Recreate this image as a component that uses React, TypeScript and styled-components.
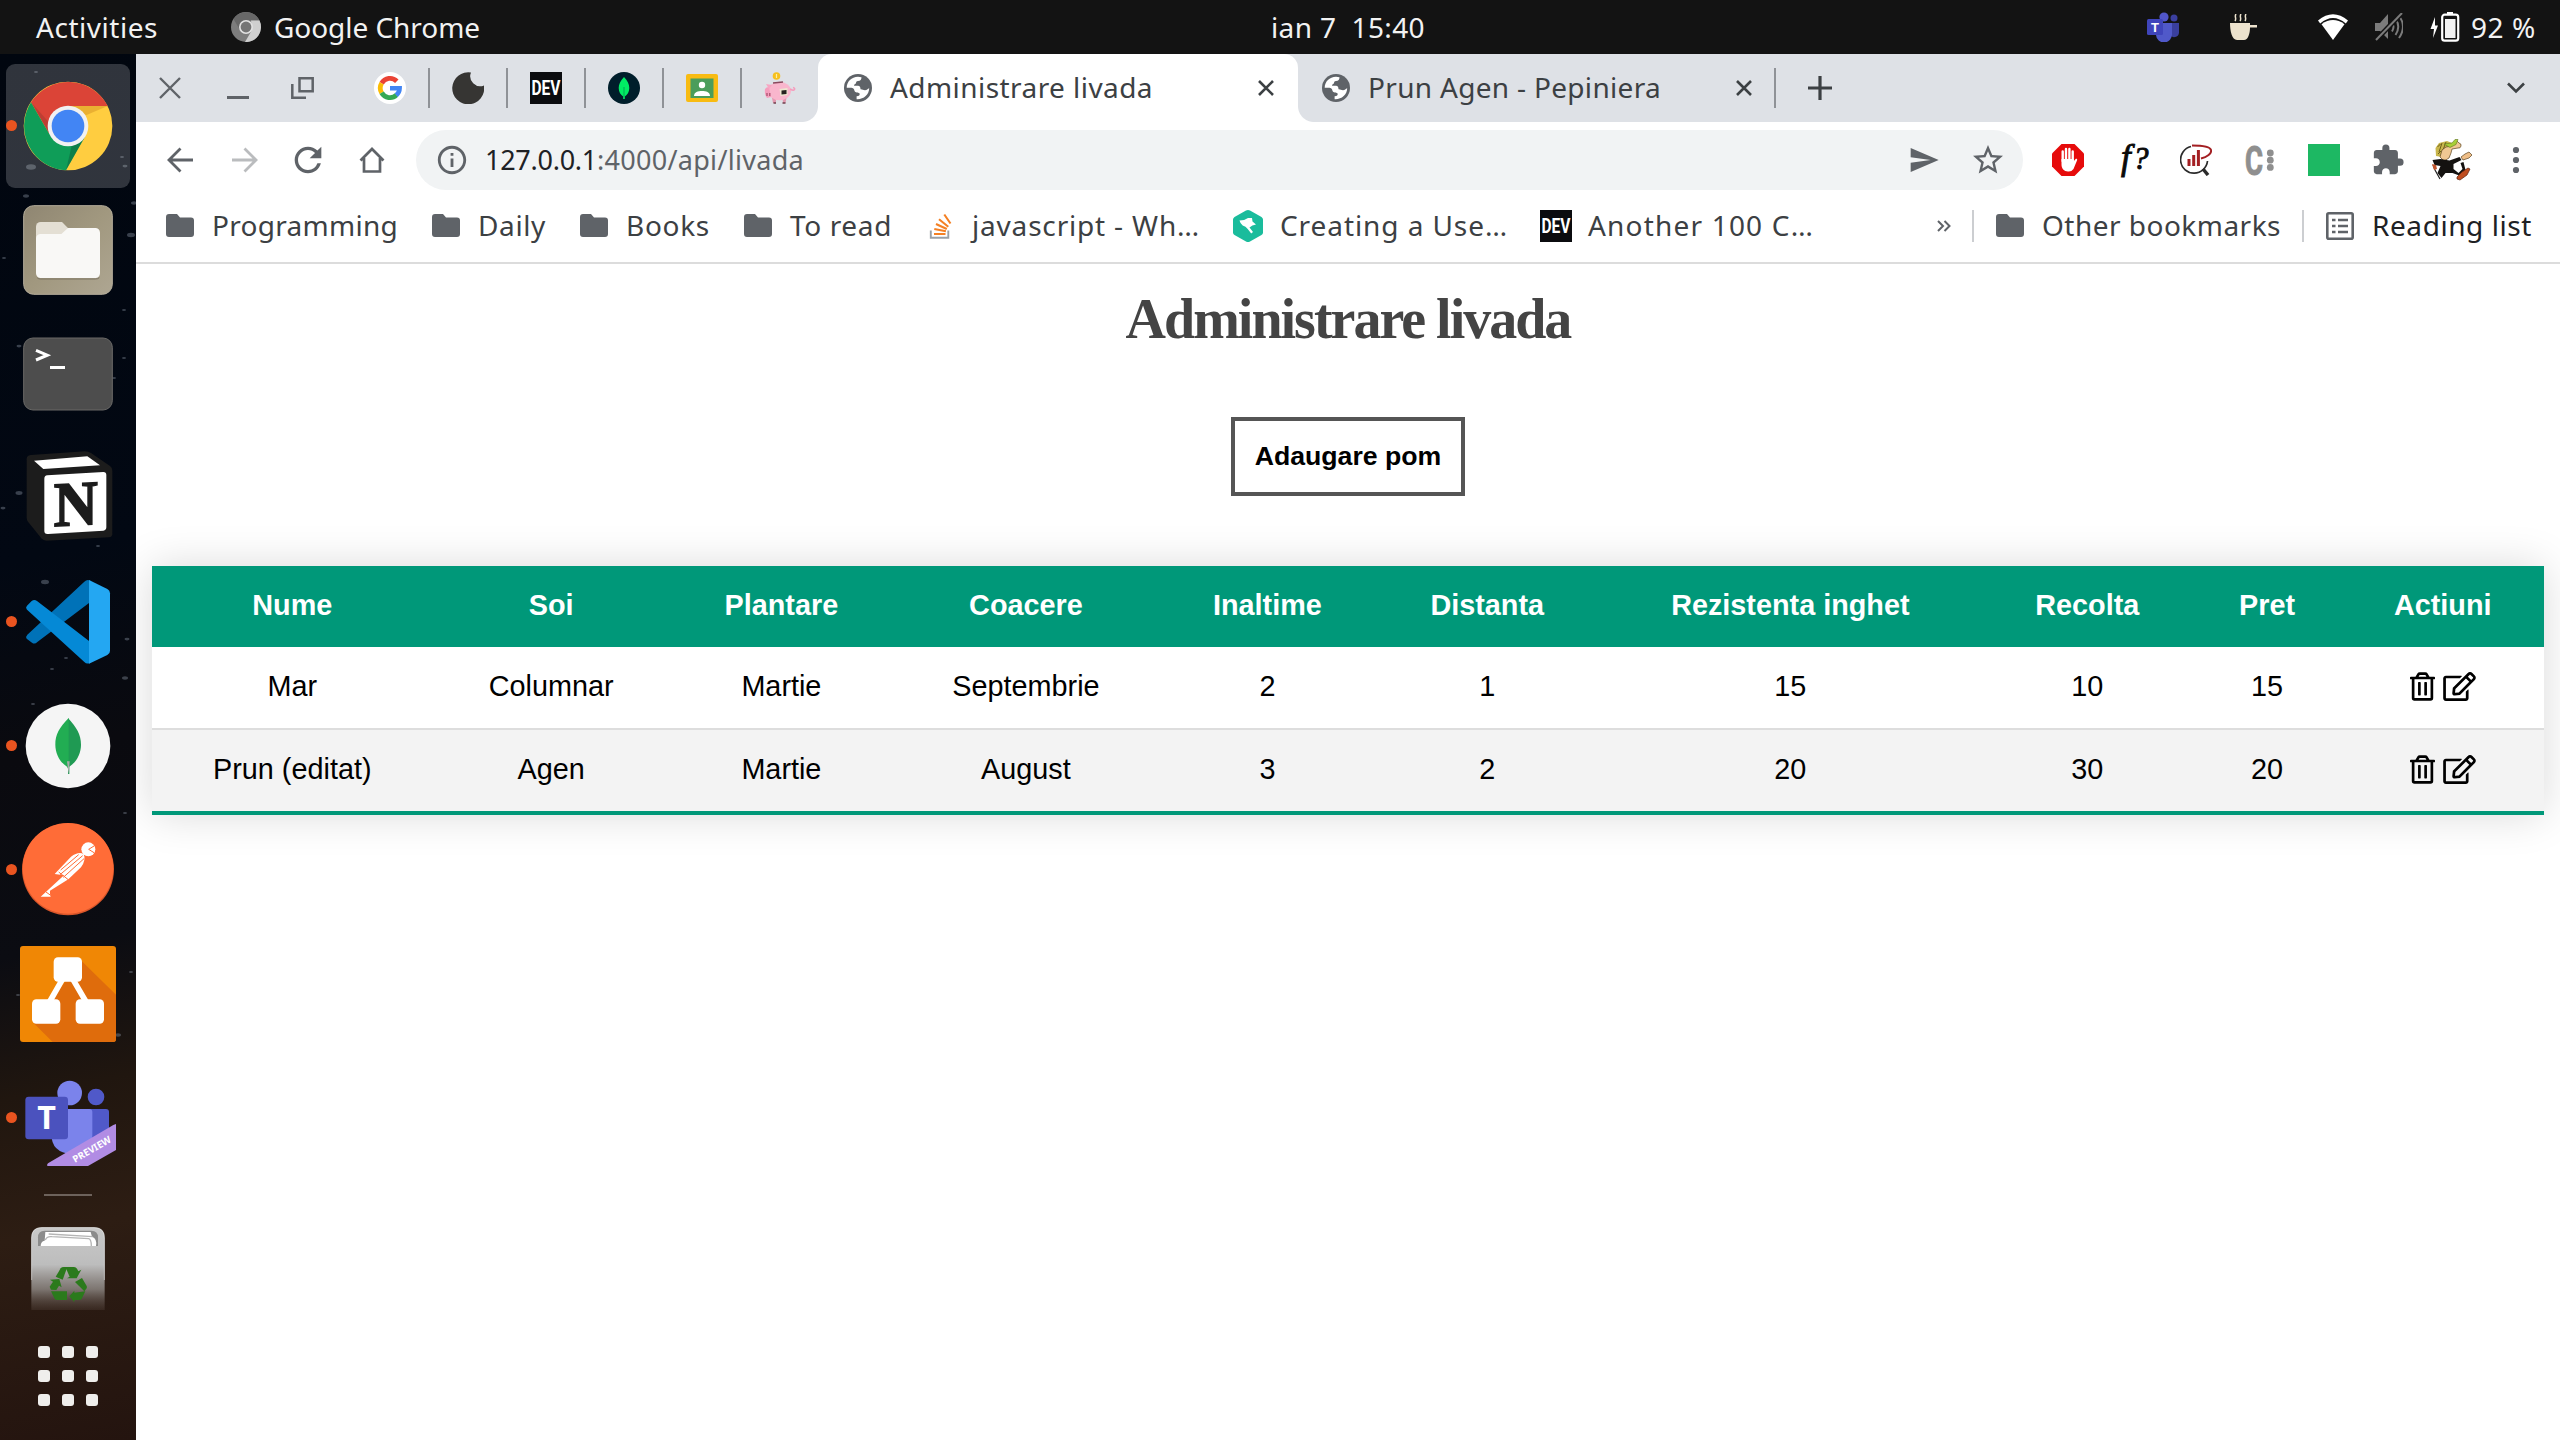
import React, { useLayoutEffect, useRef, useState } from 'react';
import styled, { createGlobalStyle, css } from 'styled-components';
import { FaRegEdit, FaRegTrashAlt } from 'react-icons/fa';
import { MdExtension, MdInfoOutline, MdRefresh, MdSend, MdStarBorder } from 'react-icons/md';

const Global = createGlobalStyle`
  * { box-sizing: border-box; }
  html, body { margin: 0; padding: 0; background: #fff; overflow: hidden; }
  svg { display: block; flex: none; }
`;

const UI_FONT = '"Noto Sans", "Open Sans", sans-serif';
const WEB_FONT = '"Liberation Sans", Arial, sans-serif';

/* ---------- Text fitted to a given width ---------- */

const LabelBox = styled.span<{ $w: number; $size: number; $color: string; $ml: number }>`
  display: block;
  flex: none;
  width: ${(p) => p.$w}px;
  margin-left: ${(p) => p.$ml}px;
  font: 400 ${(p) => p.$size}px/38px ${UI_FONT};
  color: ${(p) => p.$color};
  white-space: pre;
`;

type LabelProps = {
  w: number;
  size?: number;
  color?: string;
  ml?: number;
  children: string;
};

function Label({ w, size = 28, color = '#3c4043', ml = 0, children }: LabelProps) {
  const ref = useRef<HTMLSpanElement>(null);
  const [spacing, setSpacing] = useState(0);
  useLayoutEffect(() => {
    const natural = ref.current!.getBoundingClientRect().width;
    setSpacing((w - natural) / children.length);
  }, [w, children]);
  return (
    <LabelBox $w={w} $size={size} $color={color} $ml={ml}>
      <span ref={ref} style={{ letterSpacing: spacing }}>{children}</span>
    </LabelBox>
  );
}

/* ---------- Desktop shell ---------- */

const Desktop = styled.div`
  width: 2560px;
  height: 1440px;
  display: flex;
  flex-direction: column;
  overflow: hidden;
`;

const TopBar = styled.header`
  height: 54px;
  flex: none;
  display: flex;
  align-items: center;
  padding: 0 24px 0 36px;
  background: #131313;
`;

const Spot = styled.div<{ $ml?: number }>`
  flex: none;
  margin-left: ${(p) => p.$ml ?? 0}px;
`;

const Tray = styled.div`
  margin-left: auto;
  display: flex;
  align-items: center;
`;

const Main = styled.div`
  flex: 1;
  display: flex;
  min-height: 0;
`;

const Dock = styled.nav`
  position: relative;
  width: 136px;
  flex: none;
  display: flex;
  flex-direction: column;
  align-items: center;
  padding-top: 10px;
  background: linear-gradient(168deg, #01060f 0%, #020813 36%, #0a0a0f 50%, #0b0c12 64%, #20160f 74%, #2d1d13 84%, #24140f 100%);
`;

const Stars = styled.svg`
  position: absolute;
  inset: 0;
`;

const DockItem = styled.div<{ $active?: boolean; $running?: boolean }>`
  position: relative;
  width: 124px;
  height: 124px;
  flex: none;
  border-radius: 9px;
  ${(p) => p.$active && css`background: rgba(255, 255, 255, 0.19);`}
  ${(p) => p.$running && css`
    &::before {
      content: '';
      position: absolute;
      left: 0;
      top: 56px;
      width: 11px;
      height: 11px;
      border-radius: 50%;
      background: #e95420;
    }
  `}
`;

const DockRule = styled.div`
  width: 48px;
  height: 2px;
  margin: 14px 0 13px;
  background: #6d625b;
`;

const AppGrid = styled.div`
  display: grid;
  grid-template-columns: repeat(3, 12px);
  gap: 12px;
  margin-top: 13px;
`;

const AppDot = styled.i`
  height: 12px;
  border-radius: 3px;
  background: #efeeec;
`;

/* ---------- Browser ---------- */

const Browser = styled.section`
  width: 2424px;
  flex: none;
  display: flex;
  flex-direction: column;
  background: #fff;
`;

const TabStrip = styled.div`
  height: 68px;
  flex: none;
  display: flex;
  align-items: center;
  background: #dee1e6;

  ${LabelBox} { margin-bottom: 2px; }
`;

const PinnedTabs = styled.div`
  display: flex;
  align-items: center;
  margin-left: 60px;
  padding-right: 22px;
`;

const PinnedTab = styled.div`
  display: flex;
  align-items: center;
  & + & { margin-left: 22px; }
  & + &::before {
    content: '';
    width: 2px;
    height: 40px;
    margin-right: 22px;
    background: #8f9297;
  }
`;

const Tab = styled.div<{ $w: number; $active?: boolean }>`
  position: relative;
  width: ${(p) => p.$w}px;
  height: 68px;
  flex: none;
  display: flex;
  align-items: center;
  padding: 0 24px 0 ${(p) => (p.$active ? 26 : 24)}px;
  ${(p) => p.$active && css`
    background: #fff;
    border-radius: 14px 14px 0 0;
    &::before, &::after {
      content: '';
      position: absolute;
      bottom: 0;
      width: 16px;
      height: 16px;
    }
    &::before { left: -16px; background: radial-gradient(circle at 0 0, transparent 15.5px, #fff 16.5px); }
    &::after { right: -16px; background: radial-gradient(circle at 100% 0, transparent 15.5px, #fff 16.5px); }
  `}
`;

const End = styled.div<{ $mr?: number }>`
  margin-left: auto;
  margin-right: ${(p) => p.$mr ?? 0}px;
  display: flex;
  align-items: center;
`;

const Rule = styled.div<{ $h: number; $ml?: number; $color: string }>`
  width: 2px;
  height: ${(p) => p.$h}px;
  flex: none;
  margin-left: ${(p) => p.$ml ?? 0}px;
  background: ${(p) => p.$color};
`;

const Toolbar = styled.div`
  height: 76px;
  flex: none;
  display: flex;
  align-items: center;
  color: #5f6368;
`;

const Omnibox = styled.div`
  width: 1607px;
  height: 60px;
  flex: none;
  display: flex;
  align-items: center;
  margin-left: 31px;
  padding: 0 17px 0 19px;
  border-radius: 30px;
  background: #f1f3f4;
`;

const Bookmarks = styled.div`
  height: 66px;
  flex: none;
  display: flex;
  align-items: center;
  padding: 0 0 8px 30px;
  border-bottom: 2px solid #dcdcdc;
  color: #5f6368;

  ${LabelBox} { margin-bottom: 2px; }
`;

/* ---------- Page ---------- */

const Page = styled.main`
  flex: 1;
  display: flex;
  flex-direction: column;
  align-items: center;
  padding: 0 16px;
  overflow: hidden;
`;

const Title = styled.h1`
  margin: 23px 0 0;
  font: 700 56px/64px "Liberation Serif", "Times New Roman", serif;
  letter-spacing: -2px;
  color: #444;
`;

const AddButton = styled.button`
  height: 79px;
  margin: 66px 0 70px;
  padding: 0 20px;
  border: 4px solid #555;
  background: #fff;
  color: #000;
  font: 700 26.667px/31px ${WEB_FONT};
`;

const Table = styled.table`
  width: 100%;
  border-collapse: collapse;
  text-align: center;
  font: 400 28.8px/33px ${WEB_FONT};
  color: #000;
  box-shadow: 0 0 40px rgba(0, 0, 0, 0.15);
`;

const HeadRow = styled.tr`
  background: #009879;
  color: #fff;
`;

const Th = styled.th`
  padding: 23px 30px 25px;
`;

const Row = styled.tr<{ $last?: boolean }>`
  background: ${(p) => (p.$last ? '#f3f3f3' : '#fff')};
  border-bottom: ${(p) => (p.$last ? '4px solid #009879' : '2px solid #ddd')};
`;

const Td = styled.td`
  padding: 23px 30px 25px;
`;

const Actions = styled.div`
  height: 33px;
  display: flex;
  justify-content: center;
  align-items: center;
  gap: 8px;
  padding-bottom: 1px;
`;

/* ---------- Small icons ---------- */

const Cross = ({ s = 16, c = '#3c4043', w = 2.6 }) => (
  <svg width={s} height={s} viewBox={`0 0 ${s} ${s}`} stroke={c} strokeWidth={w}>
    <path d={`M1 1L${s - 1} ${s - 1}M${s - 1} 1L1 ${s - 1}`} />
  </svg>
);

const Globe = () => (
  <svg width="28" height="28" viewBox="0 0 28 28">
    <circle cx="14" cy="14" r="14" fill="#5f6368" />
    <path d="M2.700 13.800C2.800 7.500 7.500 2.900 14 2.700L17.500 3.200C17.500 5.500 16.500 6.800 14 7 12.300 7.200 12 8 12 9.300 11.500 10.300 10 10.200 10 11.800H14C15.800 11.800 16.500 13 16.500 15.200 18.500 15 19 16.200 21 16.200 23 16.200 23.500 15 25.200 14.300 25 21 19.500 25.600 12.600 25.200V22.300C15 22 16 21.300 15.600 19.500 15.200 18.300 12 18.800 11 17.700 10 16.600 10.500 14.800 9 14.200 7 13.600 5 14 2.700 13.800z" fill="#fff" />
  </svg>
);

const Folder = () => (
  <svg width="28" height="24" viewBox="0 0 28 24">
    <path d="M3 0h8l3 3.500h11a3 3 0 0 1 3 3V20a3 3 0 0 1-3 3H3a3 3 0 0 1-3-3V3a3 3 0 0 1 3-3z" fill="#5f6368" />
  </svg>
);

const Dev = () => (
  <svg width="32" height="32" viewBox="0 0 32 32" overflow="visible">
    <path d="M0 0h32v32H0z" fill="#0b0c0f" />
    <text x="1.500" y="23" textLength="29" lengthAdjust="spacingAndGlyphs" fill="#fff" fontFamily="Roboto, sans-serif" fontWeight="700" fontSize="20">DEV</text>
  </svg>
);

const Google = () => (
  <svg width="32" height="32" viewBox="0 0 32 32">
    <circle cx="16" cy="16" r="16" fill="#fff" />
    <g fill="none" strokeWidth="4.800">
      <path d="M7.600 11.200A9.600 9.600 0 0 1 22.800 9.200" stroke="#ea4335" />
      <path d="M7.600 20.800A9.600 9.600 0 0 1 7.600 11.200" stroke="#fbbc05" />
      <path d="M22.500 23A9.600 9.600 0 0 1 7.600 20.800" stroke="#34a853" />
      <path d="M16 16.200H25.600A9.600 9.600 0 0 1 22.300 23.200" stroke="#4285f4" strokeWidth="4.600" />
    </g>
  </svg>
);

const Moon = () => (
  <svg width="32" height="32" viewBox="0 0 32 32">
    <path d="M19 .500a10 10 0 0 0 13 13A16 16 0 1 1 19 .500z" fill="#363533" />
  </svg>
);

const MongoTab = () => (
  <svg width="32" height="32" viewBox="0 0 32 32">
    <circle cx="16" cy="16" r="16" fill="#001e2b" />
    <path d="M16 5c3.500 4 5.300 7 5.300 11 0 4-2 7-4.500 8.500V27h-1.600v-2.500C12.700 23 10.700 20 10.700 16c0-4 1.800-7 5.300-11z" fill="#00ed64" />
    <path d="M16 15v10" stroke="#00a651" strokeWidth="1" />
  </svg>
);

const Classroom = () => (
  <svg width="32" height="32" viewBox="0 0 32 32">
    <rect y="2" width="32" height="28" rx="2" fill="#f8bb12" />
    <path d="M4.500 6.500h23v19.500h-23z" fill="#4a9d5b" />
    <circle cx="16" cy="13" r="3.200" fill="#fff" />
    <path d="M8 24c0-4 4-5 8-5s8 1 8 5z" fill="#fff" />
  </svg>
);

const Piggy = () => (
  <svg width="32" height="32" viewBox="0 0 32 32">
    <circle cx="12.500" cy="4" r="3.800" fill="#f7c01e" />
    <path d="M12.500 2v4" stroke="#fff0a0" strokeWidth="1.200" />
    <path d="M8 26h4v5H9zM18.500 26h4l-1 5h-2.500z" fill="#e39ab0" />
    <path d="M9.500 31h2.500M18.500 31h3" stroke="#70404e" strokeWidth="1.600" />
    <ellipse cx="15.500" cy="19" rx="11.500" ry="9.200" fill="#f9b6cd" />
    <path d="M1 17q1-2 4-2l2 10-4 1q-3-4-2-9z" fill="#f59dbd" />
    <path d="M2 12l6 1-3 4z" fill="#f7a6c3" />
    <path d="M26 17c5 3 6-1 3-1.500" fill="none" stroke="#f59dbd" strokeWidth="1.500" />
    <path d="M9 11l10-1" stroke="#8a4a5e" strokeWidth="1.600" />
    <path d="M15.500 17l8-1v7l-7 1z" fill="#ece7d0" />
    <path d="M17.500 18.500l5-.500v4l-5 .500z" fill="#25221f" />
    <path d="M3 21v3M5.800 21v3" stroke="#a34c68" strokeWidth="1.200" />
  </svg>
);

const StackOverflow = () => (
  <svg width="24" height="28" viewBox="0 0 24 28">
    <path d="M1.800 18.500v7.200h17.500v-7.200" fill="none" stroke="#9aa0a6" strokeWidth="1.900" />
    <path d="M5 22h11.500M5.300 17l11.600 2.300M7 12l10.800 5M10 7.300l9.300 7.500M15.300 2.500l6.200 9" stroke="#f48024" strokeWidth="2.100" />
  </svg>
);

const Hex = () => (
  <svg width="30" height="32" viewBox="0 0 30 32">
    <path d="M15 0q1 0 2 .600l11.500 6.400Q30 8 30 9.500v13q0 1.500-1.500 2.500L17 31.400q-2 1-4 0L1.500 25Q0 24 0 22.500v-13Q0 8 1.500 7L13 .600q1-.600 2-.600z" fill="#1abc9c" />
    <path d="M6.500 10.500q5 0 8.500-2.500h4l.500 3.500 3.500 3q-4 .500-6.500 3l3.500 4.500-1.800 1.500-3.500-4.500q-2-3-5-3.500-2.500-2-3.200-5z" fill="#fff" />
  </svg>
);

const Abp = () => (
  <svg width="32" height="32" viewBox="0 0 32 32">
    <path d="M9.500 0h13L32 9.500v13L22.500 32h-13L0 22.500v-13z" fill="#e60b0b" />
    <g stroke="#fff" strokeWidth="2.400" strokeLinecap="round">
      <path d="M10.700 7.500V17M14 5V17M17.400 5V17M20.700 7.500V17" />
    </g>
    <path d="M9.500 15h12.400v2l1.500-1.800c1-.900 2.200-.200 1.700 1L21.500 25a6 6 0 0 1-5.500 2.500c-4 0-6.500-3-6.500-7z" fill="#fff" />
  </svg>
);

const WhatFont = () => (
  <svg width="32" height="32" viewBox="0 0 32 32" overflow="visible" fontFamily="Liberation Serif, serif" fontStyle="italic" fill="#0a0a0a" stroke="#0a0a0a" strokeWidth=".9">
    <text x="5" y="24.500" fontSize="35">f</text>
    <text x="17" y="25" fontSize="31">?</text>
  </svg>
);

const ChartLens = () => (
  <svg width="32" height="32" viewBox="0 0 32 32" fill="none">
    <path d="M11 2.500A13.500 13.500 0 1 0 27.500 17" stroke="#2b2b2b" strokeWidth="1.700" />
    <path d="M23 25l5 6" stroke="#2b2b2b" strokeWidth="3.500" />
    <path d="M12 1.500c8 0 18 1 19 4.500s-4 7-10 8.500" stroke="#a31f22" strokeWidth="2" />
    <path d="M9 22v-7M13.700 22V11M18.400 22V6" stroke="#a31f22" strokeWidth="3" />
  </svg>
);

const ColonC = () => (
  <svg width="32" height="32" viewBox="0 0 32 32" overflow="visible" fill="#8f8f8f">
    <text x="1" y="30.500" textLength="18" lengthAdjust="spacingAndGlyphs" fontFamily="Roboto, sans-serif" fontWeight="700" fontSize="41" stroke="#8f8f8f">C</text>
    <circle cx="26.300" cy="9" r="3.400" />
    <circle cx="26.300" cy="16.200" r="3.400" />
    <circle cx="26.300" cy="23.400" r="3.400" />
  </svg>
);

const GreenSquare = styled.div`
  width: 32px;
  height: 32px;
  background: #1db863;
`;

const Runner = () => (
  <svg width="42" height="42" viewBox="0 0 42 42">
    <path d="M5 17L4.500 9 8 4l8-2 5 2-3 5-3 8-4 1z" fill="#c9b64c" />
    <path d="M6.500 8l3-3M11 4l-3 9M15 3l-3 8M7 15l3-3" stroke="#6f5f1a" strokeWidth="1" />
    <path d="M11 11l4-3 6-1 5-5 2 2a2.500 2.500 0 0 1-1 5l-6 1-1 4-2 5-5 3-4-4z" fill="#f0c893" stroke="#5a4320" strokeWidth=".7" />
    <path d="M13 5l8-1 3-3.500 3 0-2 5-6 3z" fill="#a7cf37" stroke="#60761f" strokeWidth=".6" />
    <path d="M1.500 21l8-1 9 1.500 10-3.500 2 3-8 4v5l5 4 4-4-2-6 3-1 2 8-5 6-8-3-7 0-4 5-4-5 3-7-6-1z" fill="#141210" />
    <path d="M2 26l2 5 5 9" fill="none" stroke="#222" strokeWidth="1.200" />
    <path d="M30 18l4-3 4-2 3 3-3 3-6 2z" fill="#eebd86" stroke="#5a4320" strokeWidth=".7" />
    <path d="M1 25l4 1 1 4-3 1z" fill="#c2552c" />
    <path d="M26 38l5-5 6-4 2 1-3 6-7 5-3-1z" fill="#bf4d20" stroke="#5b2410" strokeWidth=".7" />
  </svg>
);

const ReadingList = () => (
  <svg width="28" height="28" viewBox="0 0 28 28" fill="none" stroke="#5f6368">
    <rect x="1.300" y="1.300" width="25.400" height="25.400" rx="1.500" strokeWidth="2.600" />
    <path d="M6 8h3.500M6 14h3.500M6 20h3.500M12 8h10M12 14h10M12 20h10" strokeWidth="2.600" />
  </svg>
);

const Arrow = ({ flip = false, c = '#5f6368' }) => (
  <svg width="26" height="26" viewBox="0 0 26 26" fill="none" stroke={c} strokeWidth="2.800">
    <path d={flip ? 'M0 13H24M12.500 1.500L24 13L12.500 24.500' : 'M26 13H2M13.500 1.500L2 13L13.500 24.500'} />
  </svg>
);

const ChromeGray = () => (
  <svg width="30" height="30" viewBox="-15 -15 30 30">
    <circle r="15" fill="#7d7d7d" />
    <path d="M-12.500-8A15 15 0 0 1 13.500-6.500H0L-6 3z" fill="#686868" />
    <path d="M13.500-6.500A15 15 0 0 1-1 15L6 3 5-6.500z" fill="#cfcfcf" />
    <circle r="7" fill="#e2e2e2" />
    <circle r="5.400" fill="#757575" />
  </svg>
);

const TeamsSmall = () => (
  <svg width="32" height="30" viewBox="0 0 32 30">
    <circle cx="27" cy="6" r="3.500" fill="#3b3f9f" />
    <path d="M23 11h9v10a5 5 0 0 1-9 2z" fill="#3a3f9e" />
    <circle cx="17" cy="5" r="4.600" fill="#5156c9" />
    <path d="M9 11h16v11a8 8 0 0 1-16 1z" fill="#5059c9" />
    <rect y="7" width="16" height="16" rx="1.500" fill="#3f45bb" />
    <text x="8" y="20" textAnchor="middle" fontFamily="Liberation Sans, sans-serif" fontWeight="700" fontSize="13" fill="#fff">T</text>
  </svg>
);

const Coffee = () => (
  <svg width="27" height="26" viewBox="0 0 27 26">
    <path d="M0 9h20v2h7v2.500h-7c0 6-2 12.500-6 12.500H7C2 26 0 17 0 9z" fill="#ece2cd" />
    <path d="M6 0c-2 3 1 4-1 7M11 0c-2 3 1 4-1 7M16 0c-2 3 1 4-1 7" stroke="#ece2cd" strokeWidth="1.500" fill="none" />
  </svg>
);

const Wifi = () => (
  <svg width="30" height="26" viewBox="0 0 30 26" fill="#fff">
    <path d="M0 6.500Q15-6 30 6.500L27.800 9.500Q15-1.500 2.200 9.500z" />
    <path d="M3.500 10.200Q15 2 26.500 10.200L15 26z" />
  </svg>
);

const Muted = () => (
  <svg width="28" height="28" viewBox="0 0 28 28" fill="none" stroke="#7b7b7b" strokeWidth="2">
    <path d="M0 10h5l8-9v25l-8-8H0z" fill="#7b7b7b" stroke="none" />
    <path d="M17 9.500q3 4 0 9M20.500 6q5.500 7.500 0 16M24 3q8 10.500 0 22" />
    <path d="M27 0L1 27" stroke="#131313" strokeWidth="5" />
    <path d="M27 0L1 27" />
  </svg>
);

const Battery = () => (
  <svg width="30" height="30" viewBox="0 0 30 30">
    <path d="M5 5L.500 17H4l-1 9 5-12.500H5z" fill="#fff" />
    <path d="M17 0h6v2h-6z" fill="#fff" />
    <rect x="12.200" y="2.700" width="16" height="26" rx="2.500" fill="none" stroke="#fff" strokeWidth="2.200" />
    <path d="M15 7h10.500v19H15z" fill="#f2f2f2" />
  </svg>
);

/* ---------- Dock icons ---------- */

const DockSvg = ({ top, children }: { top: number; children: React.ReactNode }) => (
  <svg width="124" height="124" viewBox={`18 ${top} 372 372`}>{children}</svg>
);

const ChromeApp = () => (
  <DockSvg top={42}>
    <circle cx="204" cy="228" r="133" fill="#ffcd40" />
    <path d="M93 157A133 133 0 0 1 323 168H204L150 256z" fill="#db4437" />
    <path d="M93 157A133 133 0 0 0 198 361L254 262 204 228 148 252z" fill="#0f9d58" />
    <path d="M93 157L146 216 148 250z" fill="#a63a31" opacity=".55" />
    <path d="M204 168H323L258 196z" fill="#d18f22" opacity=".45" />
    <path d="M254 262L198 361 215 288z" fill="#0a5a38" opacity=".45" />
    <circle cx="204" cy="228" r="61" fill="#f1f1f1" />
    <circle cx="204" cy="228" r="49" fill="#4285f4" />
  </DockSvg>
);

const FilesApp = () => (
  <DockSvg top={414}>
    <defs>
      <linearGradient id="files" x1="0" y1="0" x2="1" y2="1">
        <stop offset="0" stopColor="#8f8672" /><stop offset=".5" stopColor="#a1987f" /><stop offset="1" stopColor="#aea692" />
      </linearGradient>
    </defs>
    <rect x="71" y="467" width="266" height="266" rx="30" fill="url(#files)" stroke="#b5ad9b" strokeWidth="3" />
    <path d="M108 600V530a14 14 0 0 1 14-14h64l20 20v60z" fill="#e4dfd4" />
    <path d="M108 566a14 14 0 0 1 14-14h62l20-18h82a14 14 0 0 1 14 14v122a14 14 0 0 1-14 14H122a14 14 0 0 1-14-14z" fill="#f9f8f6" />
    <path d="M112 684q4 3 10 3h164q8 0 12-4" fill="none" stroke="#7d7462" strokeWidth="3" />
  </DockSvg>
);

const TerminalApp = () => (
  <DockSvg top={786}>
    <rect x="71" y="864" width="266" height="216" rx="28" fill="#4d4d4d" stroke="#6a6967" strokeWidth="3" />
    <path d="M108 901L142 915.500L108 930" fill="none" stroke="#fff" strokeWidth="9" />
    <path d="M150 948h45v9h-45z" fill="#fff" />
  </DockSvg>
);

const NotionApp = () => (
  <DockSvg top={-12}>
    <path d="M80 58q0-12 12-13L255 34q10 0 18 5L330 78q7 5 7 14V282q0 9-10 10L140 302q-10 0-16-7L84 245q-4-5-4-12z" fill="#1c1c1c" />
    <path d="M102 62L262 49 300 76 130 87z" fill="#fff" />
    <path d="M142 106L310 96q9 0 9 9V262q0 9-9 10L144 282q-11 1-11-9V116q0-9 9-10z" fill="#fff" />
    <text transform="translate(161 259) skewY(-3)" textLength="132" lengthAdjust="spacingAndGlyphs" fontFamily="Liberation Serif, serif" fontWeight="700" fontSize="190" fill="#1c1c1c" stroke="#1c1c1c" strokeWidth="5">N</text>
  </DockSvg>
);

const CodeApp = () => (
  <DockSvg top={360}>
    <path d="M80 596q-4-6 2-12L253 425q8-8 18-3v64L112 606q-8 8-16 2z" fill="#0072b8" />
    <path d="M80 508q-4-6 1-11l14-14q8-6 16 0L271 606v62q-10 6-18-2L82 510z" fill="#0589d6" />
    <path d="M267 420L322 447q8 4 8 13V632q0 9-8 13L267 671z" fill="#24a7f2" />
  </DockSvg>
);

const MongoApp = () => (
  <DockSvg top={732}>
    <circle cx="204" cy="918" r="127" fill="#f5f5f5" />
    <path d="M204 834C230 862 243 884 243 914 243 942 228 968 208 980V1002H204z" fill="#1f9a53" />
    <path d="M206 834C178 862 166 884 166 914 166 942 181 968 201 980L206 990z" fill="#22ad53" />
    <path d="M201 964h8l-3 38z" fill="#aaa" />
  </DockSvg>
);

const PostmanApp = () => (
  <DockSvg top={1104}>
    <circle cx="204" cy="1288" r="138" fill="#d9562a" />
    <circle cx="204" cy="1285" r="136" fill="#ff6c37" />
    <circle cx="265" cy="1228" r="21" fill="#fff" />
    <path d="M164 1302L213 1250q22-16 38-8 8 18-8 40L205 1318 150 1352V1362l2 8H122L148 1346 192 1306z" fill="#fff" />
    <path d="M248 1247L180 1304M252 1256L190 1312M176 1296L206 1320M266 1228l16-10M266 1228l16 10M182 1290L236 1244M138 1356l14 10" stroke="#ff6c37" strokeWidth="3" fill="none" />
  </DockSvg>
);

const DrawioApp = () => (
  <DockSvg top={6}>
    <rect x="60" y="48" width="288" height="288" rx="9" fill="#f08705" />
    <path d="M244 92L348 194V327q0 9-9 9H158L100 278 200 150z" fill="#df6c0c" />
    <path d="M192 140L145 222M214 140L262 222" stroke="#fff" strokeWidth="17" />
    <rect x="161" y="82" width="85" height="73" rx="13" fill="#fff" />
    <rect x="96" y="208" width="85" height="73" rx="13" fill="#fff" />
    <rect x="227" y="208" width="85" height="73" rx="13" fill="#fff" />
  </DockSvg>
);

const TeamsApp = () => (
  <DockSvg top={378}>
    <circle cx="288" cy="501" r="25" fill="#5059c9" />
    <path d="M262 537h56q9 0 9 9v70l-60 34z" fill="#5059c9" />
    <circle cx="209" cy="489" r="37" fill="#7b83eb" />
    <path d="M154 537h114q9 0 9 9v70q0 56-62 56-61-4-61-60z" fill="#7b83eb" />
    <rect x="76" y="500" width="128" height="128" rx="10" fill="#4b52be" />
    <text x="140" y="598" textAnchor="middle" textLength="56" lengthAdjust="spacingAndGlyphs" fontFamily="Noto Sans, sans-serif" fontWeight="700" fontSize="96" fill="#fff">T</text>
    <path d="M348 582V660L264 708H142q-2-5 2-8L340 585z" fill="#b18ce4" />
    <text transform="translate(225 699) rotate(-30)" textLength="128" fontFamily="Noto Sans, sans-serif" fontWeight="700" fontSize="29" fill="#fff">PREVIEW</text>
  </DockSvg>
);

const TrashApp = () => (
  <DockSvg top={837}>
    <defs>
      <linearGradient id="bin" x1="0" y1="0" x2="0" y2="1">
        <stop offset="0" stopColor="#c9c9c9" /><stop offset=".45" stopColor="#bdbdbd" />
        <stop offset=".75" stopColor="#8b8581" stopOpacity=".85" /><stop offset="1" stopColor="#5b4b43" stopOpacity=".3" />
      </linearGradient>
    </defs>
    <path d="M94 1140V924q0-32 32-32H282q32 0 32 32V1140z" fill="url(#bin)" />
    <path d="M95 1050V924q0-31 31-31H282q31 0 31 31V1050" fill="none" stroke="#e4e4e4" strokeWidth="3" opacity=".6" />
    <path d="M114 948V922q0-20 20-20H274q20 0 20 20V948z" fill="#8b8b8b" />
    <path d="M122 948q0-14 12-16l2-26H272l4 14q16 6 12 28z" fill="#fff" />
    <path d="M146 912L278 920M136 930q4-12 20-10l110 6q8 2 8 22" stroke="#b5b5b5" strokeWidth="4" fill="none" />
    <g fill="#2b7a1c">
      <path d="M167 1040L182 1015q3-4 9-4h11l-14 38z" />
      <path d="M196 1011h26q6 0 9 5l4 8 9-5-14 26h-29l8-5z" />
      <path d="M225 1056l21-12 14 24q2 4-1 8l-6 8z" />
      <path d="M256 1084l-11 22q-3 4-8 4h-14v7l-15-18 15-17v6z" />
      <path d="M201 1084v26h-30q-5 0-7-4l-11-22z" />
      <path d="M153 1079l-4-9 10-15-9-6 28-2 7 25-8-5-8 13z" />
    </g>
  </DockSvg>
);

const dockApps = [
  { icon: <ChromeApp />, active: true, running: true },
  { icon: <FilesApp /> },
  { icon: <TerminalApp /> },
  { icon: <NotionApp /> },
  { icon: <CodeApp />, running: true },
  { icon: <MongoApp />, running: true },
  { icon: <PostmanApp />, running: true },
  { icon: <DrawioApp /> },
  { icon: <TeamsApp />, running: true },
];

const stars = [
  [31, 113, 5], [36, 18, 2], [26, 142, 3], [125, 112, 2.5], [131, 181, 4], [63, 194, 3], [80, 207, 2], [104, 205, 2], [4, 204, 2],
  [134, 149, 3], [124, 256, 2], [124, 304, 2], [19, 292, 2.5], [65, 318, 3], [114, 324, 2], [19, 439, 3.5], [3, 454, 2.5],
  [98, 492, 2], [45, 528, 4], [127, 585, 2.5], [52, 615, 2], [125, 624, 3], [66, 604, 2], [33, 650, 2], [125, 759, 2],
  [131, 918, 2], [118, 981, 3], [18, 941, 2], [122, 103, 2],
];

/* ---------- Data ---------- */

const columns = ['Nume', 'Soi', 'Plantare', 'Coacere', 'Inaltime', 'Distanta', 'Rezistenta inghet', 'Recolta', 'Pret', 'Actiuni'];
const trees = [
  ['Mar', 'Columnar', 'Martie', 'Septembrie', '2', '1', '15', '10', '15'],
  ['Prun (editat)', 'Agen', 'Martie', 'August', '3', '2', '20', '30', '20'],
];

const pinned = [<Google />, <Moon />, <Dev />, <MongoTab />, <Classroom />, <Piggy />];

export default function App() {
  return (
    <Desktop>
      <Global />
      <TopBar>
        <Label w={122} color="#f2f2f2">Activities</Label>
        <Spot $ml={73}><ChromeGray /></Spot>
        <Label w={206} ml={13} color="#f2f2f2">Google Chrome</Label>
        <Label w={154} ml={791} color="#f2f2f2">{'ian 7  15:40'}</Label>
        <Tray>
          <Spot><TeamsSmall /></Spot>
          <Spot $ml={51}><Coffee /></Spot>
          <Spot $ml={61}><Wifi /></Spot>
          <Spot $ml={27}><Muted /></Spot>
          <Spot $ml={27}><Battery /></Spot>
          <Label w={65} ml={11} color="#f2f2f2">92 %</Label>
        </Tray>
      </TopBar>

      <Main>
        <Dock>
          <Stars width="136" height="1386" fill="#8d97a5">
            {stars.map(([x, y, r], i) => (
              <ellipse key={i} cx={x} cy={y} rx={r} ry={r * 0.55} opacity={0.4} />
            ))}
          </Stars>
          {dockApps.map((app, i) => (
            <DockItem key={i} $active={app.active} $running={app.running}>{app.icon}</DockItem>
          ))}
          <DockRule />
          <DockItem><TrashApp /></DockItem>
          <AppGrid>
            {Array.from({ length: 9 }, (_, i) => <AppDot key={i} />)}
          </AppGrid>
        </Dock>

        <Browser>
          <TabStrip>
            <Spot $ml={23}><Cross s={22} c="#5f6368" w={2.4} /></Spot>
            <Spot $ml={46}>
              <svg width="22" height="22" viewBox="0 0 22 22"><path d="M0 19h22v3H0z" fill="#5f6368" /></svg>
            </Spot>
            <Spot $ml={42}>
              <svg width="23" height="22" viewBox="0 0 23 22" fill="none" stroke="#5f6368" strokeWidth="2.500">
                <path d="M8.500 1.300h13.200v13H8.500zM1.300 7v13.700H15" />
              </svg>
            </Spot>
            <PinnedTabs>
              {pinned.map((icon, i) => <PinnedTab key={i}>{icon}</PinnedTab>)}
            </PinnedTabs>
            <Tab $w={480} $active>
              <Globe />
              <Label w={263} ml={18}>Administrare livada</Label>
              <End><Cross /></End>
            </Tab>
            <Tab $w={478}>
              <Globe />
              <Label w={293} ml={18}>Prun Agen - Pepiniera</Label>
              <End><Cross /></End>
            </Tab>
            <Rule $h={40} $color="#8f9297" $ml={-2} />
            <Spot $ml={32}>
              <svg width="24" height="24" viewBox="0 0 24 24"><path d="M12 0v24M0 12h24" stroke="#3c4043" strokeWidth="3.200" /></svg>
            </Spot>
            <End $mr={35}>
              <svg width="18" height="12" viewBox="0 0 18 12"><path d="M1 1.500l8 8 8-8" fill="none" stroke="#3c4043" strokeWidth="2.600" /></svg>
            </End>
          </TabStrip>

          <Toolbar>
            <Spot $ml={31}><Arrow /></Spot>
            <Spot $ml={39}><Arrow flip c="#babcbe" /></Spot>
            <Spot $ml={30}><MdRefresh size={40} /></Spot>
            <Spot $ml={31}>
              <svg width="26" height="26" viewBox="0 0 26 26" fill="none" stroke="#5f6368" strokeWidth="2.700">
                <path d="M1.500 13.500L13 2l11.500 11.500M5 11v13.500h16V11" />
              </svg>
            </Spot>
            <Omnibox>
              <MdInfoOutline size={34} />
              <Label w={112} ml={16} size={27} color="#202124">127.0.0.1</Label>
              <Label w={207} size={27} color="#5f6368">:4000/api/livada</Label>
              <End>
                <MdSend size={32} />
                <Spot $ml={30}><MdStarBorder size={36} /></Spot>
              </End>
            </Omnibox>
            <Spot $ml={29}><Abp /></Spot>
            <Spot $ml={32}><WhatFont /></Spot>
            <Spot $ml={32}><ChartLens /></Spot>
            <Spot $ml={32}><ColonC /></Spot>
            <Spot $ml={32}><GreenSquare /></Spot>
            <Spot $ml={31}><MdExtension size={34} /></Spot>
            <Spot $ml={26}><Runner /></Spot>
            <Spot $ml={36}>
              <svg width="14" height="28" viewBox="0 0 14 28" fill="#5f6368">
                <circle cx="7" cy="4" r="3.100" /><circle cx="7" cy="14" r="3.100" /><circle cx="7" cy="24" r="3.100" />
              </svg>
            </Spot>
          </Toolbar>

          <Bookmarks>
            <Folder />
            <Label w={186} ml={18}>Programming</Label>
            <Spot $ml={34}><Folder /></Spot>
            <Label w={68} ml={18}>Daily</Label>
            <Spot $ml={34}><Folder /></Spot>
            <Label w={84} ml={18}>Books</Label>
            <Spot $ml={34}><Folder /></Spot>
            <Label w={102} ml={18}>To read</Label>
            <Spot $ml={37}><StackOverflow /></Spot>
            <Label w={228} ml={19}>javascript - Wh…</Label>
            <Spot $ml={33}><Hex /></Spot>
            <Label w={228} ml={17}>Creating a Use…</Label>
            <Spot $ml={32}><Dev /></Spot>
            <Label w={226} ml={16}>Another 100 C…</Label>
            <Spot $ml={123}>
              <svg width="14" height="12" viewBox="0 0 14 12" fill="none" stroke="#5f6368" strokeWidth="2"><path d="M1 1l5 5-5 5M7.500 1l5 5-5 5" /></svg>
            </Spot>
            <Rule $h={32} $ml={21} $color="#ccced1" />
            <Spot $ml={22}><Folder /></Spot>
            <Label w={239} ml={18}>Other bookmarks</Label>
            <Rule $h={32} $ml={21} $color="#ccced1" />
            <Spot $ml={22}><ReadingList /></Spot>
            <Label w={160} ml={18} color="#202124">Reading list</Label>
          </Bookmarks>

          <Page>
            <Title>Administrare livada</Title>
            <AddButton>Adaugare pom</AddButton>
            <Table>
              <thead>
                <HeadRow>{columns.map((c) => <Th key={c}>{c}</Th>)}</HeadRow>
              </thead>
              <tbody>
                {trees.map((tree, r) => (
                  <Row key={tree[0]} $last={r === trees.length - 1}>
                    {tree.map((v, i) => <Td key={i}>{v}</Td>)}
                    <Td>
                      <Actions>
                        <FaRegTrashAlt size={29} style={{ width: 25 }} />
                        <FaRegEdit size={29} style={{ width: 33 }} />
                      </Actions>
                    </Td>
                  </Row>
                ))}
              </tbody>
            </Table>
          </Page>
        </Browser>
      </Main>
    </Desktop>
  );
}
